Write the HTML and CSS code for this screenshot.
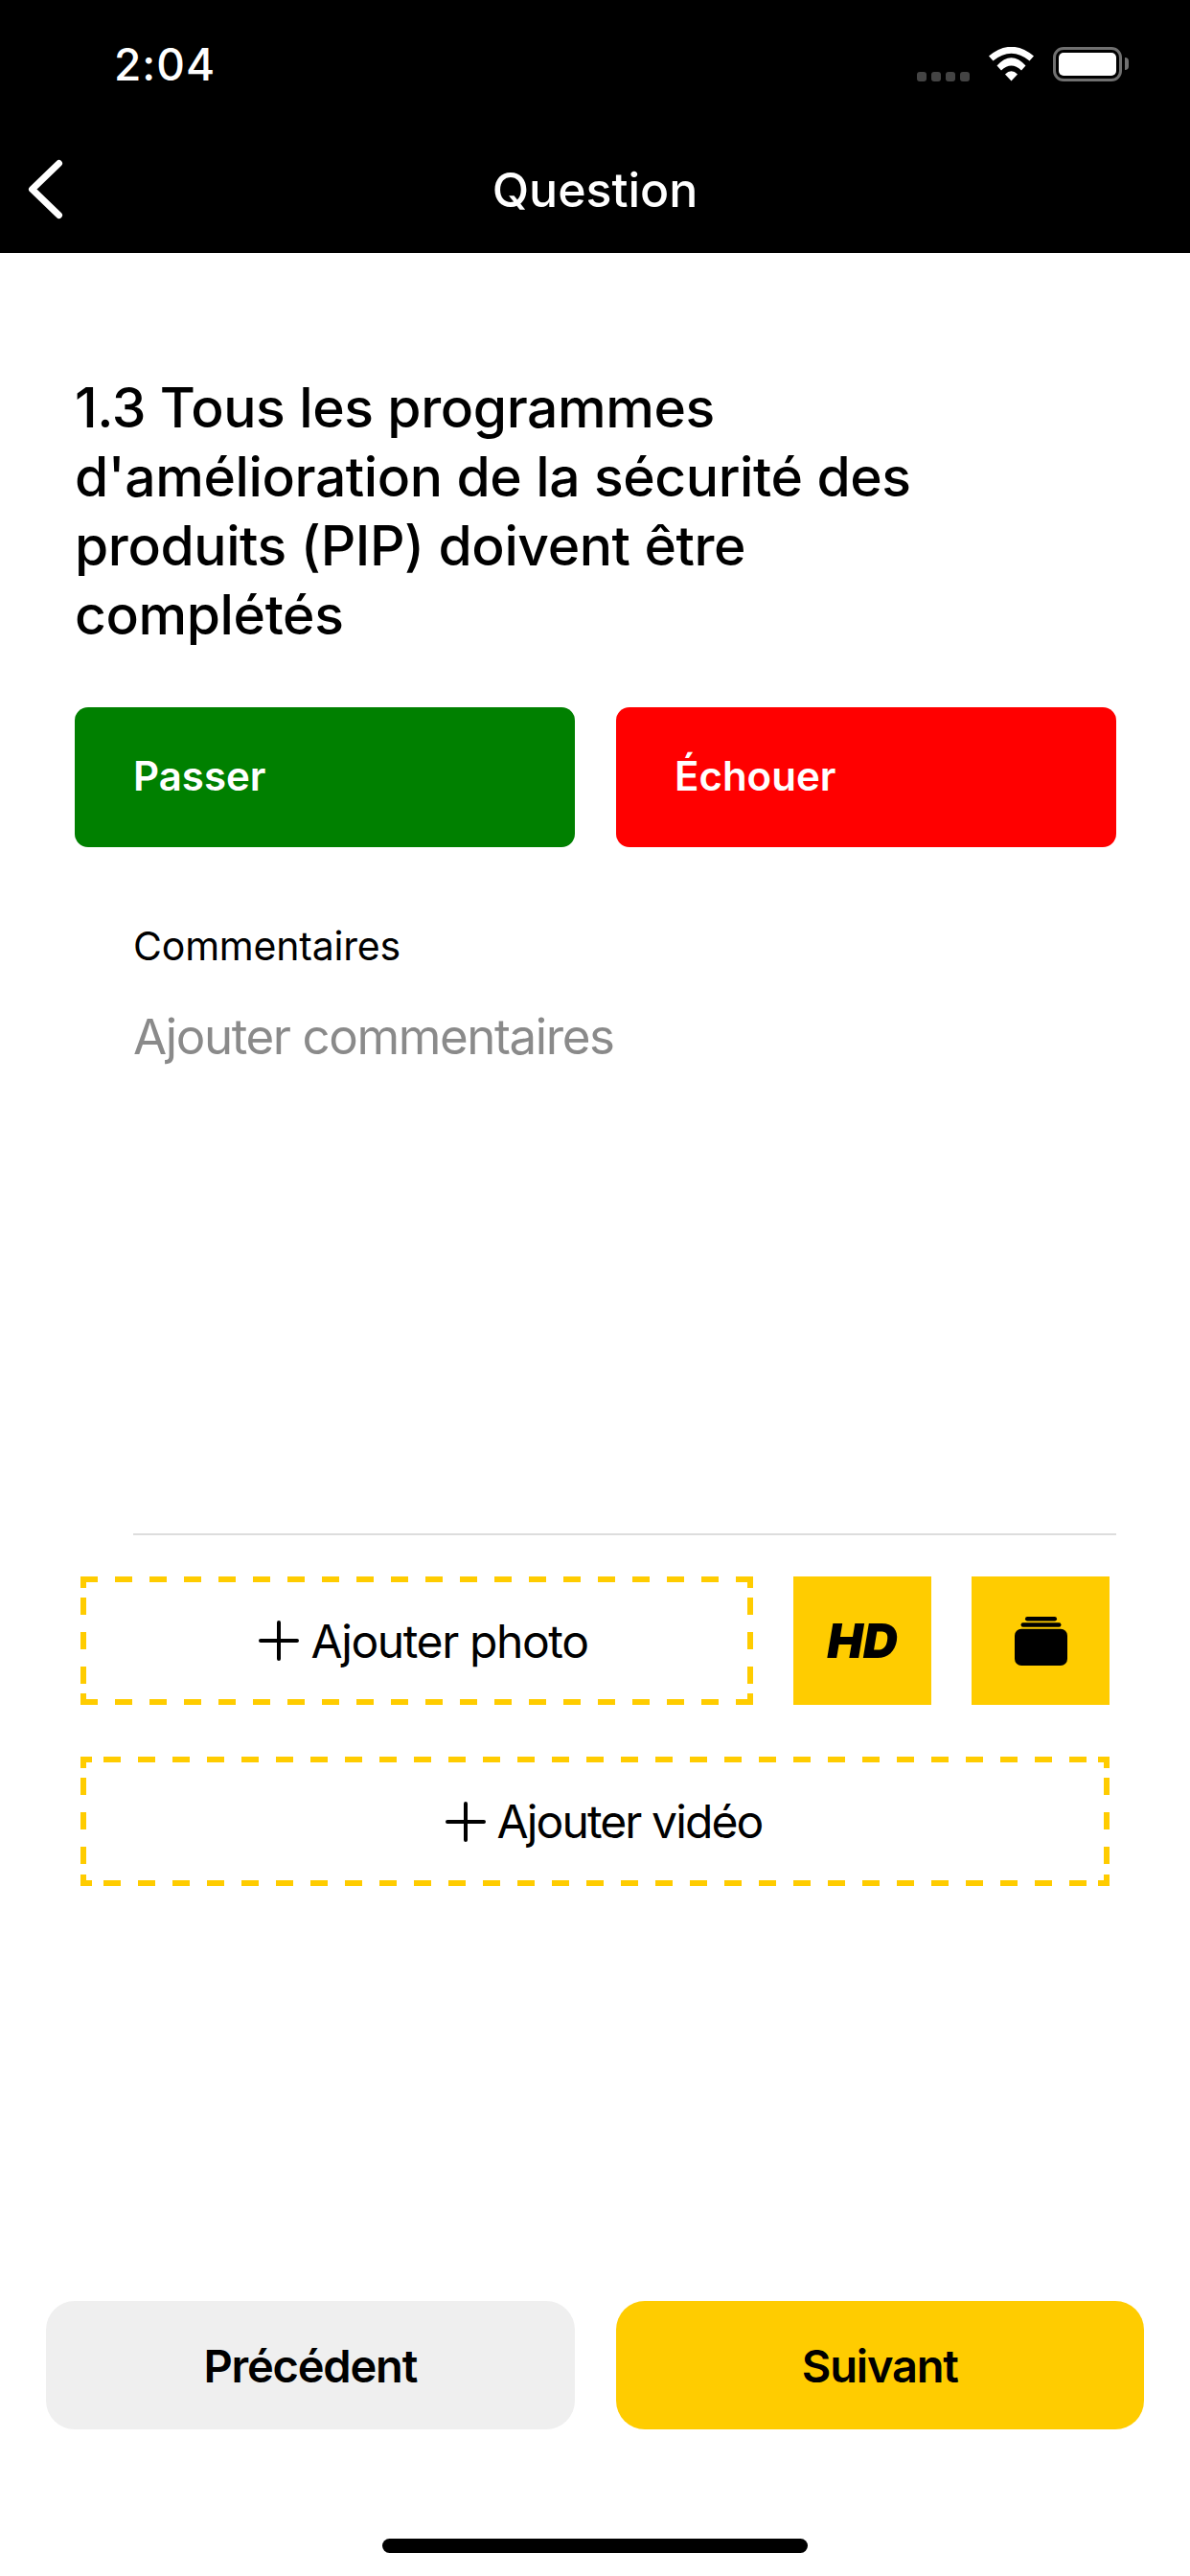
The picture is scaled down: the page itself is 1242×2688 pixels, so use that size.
FILE: index.html
```html
<!DOCTYPE html>
<html lang="fr">
<head>
    <meta charset="UTF-8">
    <title>Question</title>
    <link rel="stylesheet" href="styles.css">
</head>
<body>
    <div class="app">
        <!-- Status bar and nav -->
        <header class="top-bar">
            <div class="status-bar">
                <span class="clock">2:04</span>
                <div class="status-icons">
                    <div class="signal"><i></i><i></i><i></i><i></i></div>
                    <svg class="wifi" width="47" height="36" viewBox="0 0 47 36">
                        <path d="M0 9.500Q23.500 -10 47 9.500L42.500 14.500Q23.500 -1 4.500 14.500Z" fill="#fff"/>
                        <path d="M8.500 19.500Q23.500 3 38.500 19.500L34 24.500Q23.500 14.500 13 24.500Z" fill="#fff"/>
                        <path d="M17 28.500Q23.500 22 30 28.500L23.500 35.500Z" fill="#fff"/>
                    </svg>
                    <div class="battery"><div class="battery-fill"></div></div>
                </div>
            </div>
            <nav class="nav-bar">
                <svg class="back" width="40" height="64" viewBox="0 0 40 64">
                    <path d="M33.500 5.500L5.500 32.500L33.500 59.500" fill="none" stroke="#fff" stroke-width="7" stroke-linecap="round" stroke-linejoin="round"/>
                </svg>
                <h1 class="nav-title">Question</h1>
            </nav>
        </header>

        <main class="content">
            <h2 class="question">1.3 Tous les programmes d'amélioration de la sécurité des produits (PIP) doivent être complétés</h2>

            <div class="verdict-row">
                <button class="verdict verdict-pass">Passer</button>
                <button class="verdict verdict-fail">Échouer</button>
            </div>

            <div class="comments">
                <label class="comments-label">Commentaires</label>
                <div class="comments-input">Ajouter commentaires</div>
            </div>

            <div class="media-row">
                <button class="add-btn add-photo">
                    <svg width="42" height="42" viewBox="0 0 42 42"><path d="M21 2V40M2 21H40" stroke="#000" stroke-width="4" stroke-linecap="round"/></svg>
                    Ajouter photo
                </button>
                <button class="square-btn"><span class="hd">HD</span></button>
                <button class="square-btn">
                    <svg width="55" height="51" viewBox="0 0 55 51">
                        <rect x="11" y="0" width="33" height="4.500" rx="2.250"/>
                        <rect x="6.500" y="6.300" width="42" height="4.500" rx="2.250"/>
                        <rect x="0" y="12.700" width="55" height="38.300" rx="7"/>
                    </svg>
                </button>
            </div>

            <button class="add-btn add-video">
                <svg width="42" height="42" viewBox="0 0 42 42"><path d="M21 2V40M2 21H40" stroke="#000" stroke-width="4" stroke-linecap="round"/></svg>
                Ajouter vidéo
            </button>
        </main>

        <footer class="footer">
            <div class="footer-buttons">
                <button class="step step-prev">Précédent</button>
                <button class="step step-next">Suivant</button>
            </div>
            <div class="home-indicator"></div>
        </footer>
    </div>
</body>
</html>
```

FILE: styles.css
```css
:root {
    --yellow: #ffcc00;
    /* side dashes of the add buttons, same on both boxes */
    --dash-side: linear-gradient(180deg,
        var(--yellow) 0 12px,
        transparent 12px 22px,
        var(--yellow) 22px 40px,
        transparent 40px 58px,
        var(--yellow) 58px 76px,
        transparent 76px 94px,
        var(--yellow) 94px 112px,
        transparent 112px calc(100% - 12px),
        var(--yellow) calc(100% - 12px));
    --dash-top: linear-gradient(90deg, var(--yellow) 0 18px, transparent 18px 36px);
    --solid: linear-gradient(var(--yellow), var(--yellow));
}

* {
    box-sizing: border-box;
}

html, body {
    margin: 0;
    padding: 0;
    background: #fff;
}

body {
    font-family: Inter, "Noto Sans", sans-serif;
    color: #000;
}

button {
    font-family: inherit;
    border: none;
    padding: 0;
    cursor: pointer;
}

.app {
    width: 1242px;
    height: 2688px;
    display: flex;
    flex-direction: column;
    overflow: hidden;
}

/* Top bar */
.top-bar {
    height: 264px;
    background: #000;
    color: #fff;
    flex: none;
}

.status-bar {
    height: 132px;
    display: flex;
    justify-content: space-between;
    align-items: center;
    padding: 2px 71px 0 119px;
}

.clock {
    font-size: 46px;
    font-weight: 500;
    letter-spacing: 1px;
}

.status-icons {
    display: flex;
    align-items: center;
    gap: 20px;
}

.signal {
    display: flex;
    gap: 5px;
    margin-top: 26px;
}

.signal i {
    width: 10px;
    height: 10px;
    border-radius: 3px;
    background: #444;
}

.battery {
    width: 72px;
    height: 36px;
    border: 3px solid #707070;
    border-radius: 11px;
    padding: 3px;
    position: relative;
}

.battery::after {
    content: "";
    position: absolute;
    right: -10px;
    top: 8px;
    width: 4px;
    height: 13px;
    border-radius: 0 4px 4px 0;
    background: #707070;
}

.battery-fill {
    height: 100%;
    background: #fff;
    border-radius: 5px;
}

.nav-bar {
    height: 132px;
    display: flex;
    align-items: center;
    justify-content: center;
    position: relative;
}

.back {
    position: absolute;
    left: 28px;
    top: 33px;
}

.nav-title {
    margin: 0;
    font-size: 50px;
    font-weight: 500;
}

/* Main */
.content {
    flex: 1;
    padding: 0 78px;
    display: flex;
    flex-direction: column;
}

.question {
    margin: 126px 0 0;
    max-width: 960px;
    font-size: 57px;
    font-weight: 450;
    line-height: 72px;
    letter-spacing: -0.4px;
}

.verdict-row {
    display: flex;
    gap: 43px;
    margin-top: 60px;
    width: 1087px;
}

.verdict {
    flex: 1;
    height: 146px;
    border-radius: 14px;
    color: #fff;
    font-size: 42px;
    font-weight: 600;
    text-align: left;
    padding: 0 0 3px 61px;
}

.verdict-pass {
    background: #008000;
}

.verdict-fail {
    background: #ff0000;
}

.comments {
    margin-left: 61px;
    width: 1026px;
    height: 718px;
    border-bottom: 2px solid #ddd;
    padding-top: 78px;
    display: flex;
    flex-direction: column;
}

.comments-label {
    font-size: 41px;
    line-height: 50px;
    letter-spacing: -0.2px;
}

.comments-input {
    margin-top: 34px;
    font-size: 51px;
    line-height: 72px;
    letter-spacing: -1.400px;
    color: #8a8a8a;
}

.media-row {
    display: flex;
    margin: 43px 0 0 6px;
}

.add-btn {
    background-color: #fff;
    background-repeat: no-repeat, no-repeat, repeat-x, repeat-x;
    font-size: 48px;
    font-weight: 400;
    display: flex;
    align-items: center;
    justify-content: center;
    gap: 12px;
    padding-left: 14px;
    color: #000;
    letter-spacing: -1.400px;
}

.add-photo {
    width: 702px;
    height: 134px;
    margin-right: 42px;
    background-image: var(--dash-side), var(--dash-side), var(--dash-top), var(--dash-top);
    background-size: 6px 100%, 6px 100%, 36px 6px, 36px 6px;
    background-position: left top, right top, left top, left bottom;
}

.square-btn {
    width: 144px;
    height: 134px;
    background: var(--yellow);
    display: flex;
    align-items: center;
    justify-content: center;
    margin-right: 42px;
}

.square-btn:last-child {
    margin-right: 0;
}

.hd {
    font-size: 50px;
    font-weight: 900;
    font-style: italic;
}

.add-video {
    width: 1074px;
    height: 135px;
    margin: 54px 0 0 6px;
    padding-left: 18px;
    letter-spacing: -1.900px;
    background-image: var(--dash-side), var(--dash-side), var(--solid), var(--solid), var(--solid), var(--solid), var(--dash-top), var(--dash-top);
    background-size: 6px 100%, 6px 100%, 12px 6px, 12px 6px, 12px 6px, 12px 6px, 36px 6px, 36px 6px;
    background-position: left top, right top, left top, right top, left bottom, right bottom, 24px top, 24px bottom;
    background-repeat: no-repeat, no-repeat, no-repeat, no-repeat, no-repeat, no-repeat, repeat-x, repeat-x;
}

/* Footer */
.footer {
    flex: none;
    padding: 0 48px 24px;
}

.footer-buttons {
    display: flex;
    gap: 43px;
}

.step {
    flex: 1;
    height: 134px;
    border-radius: 30px;
    font-size: 47px;
    font-weight: 600;
    color: #000;
    letter-spacing: -1.200px;
}

.step-prev {
    background: #efefef;
}

.step-next {
    background: var(--yellow);
}

.home-indicator {
    width: 444px;
    height: 15px;
    margin: 114px auto 0;
    background: #000;
    border-radius: 8px;
}
```
